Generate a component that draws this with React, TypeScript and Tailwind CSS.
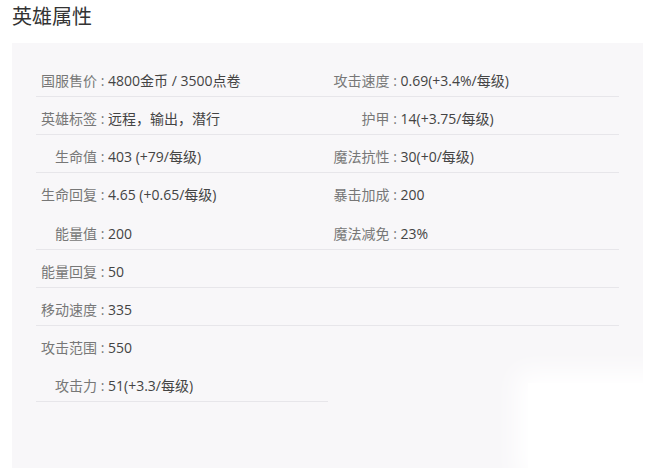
import React from "react";

type Cell = { label: string; value: string } | null;

const rows: { left: Cell; right: Cell; lb: boolean; rb: boolean }[] = [
  { left: { label: "国服售价", value: "4800金币 / 3500点卷" }, right: { label: "攻击速度", value: "0.69(+3.4%/每级)" }, lb: true, rb: true },
  { left: { label: "英雄标签", value: "远程，输出，潜行" }, right: { label: "护甲", value: "14(+3.75/每级)" }, lb: true, rb: true },
  { left: { label: "生命值", value: "403 (+79/每级)" }, right: { label: "魔法抗性", value: "30(+0/每级)" }, lb: true, rb: true },
  { left: { label: "生命回复", value: "4.65 (+0.65/每级)" }, right: { label: "暴击加成", value: "200" }, lb: false, rb: false },
  { left: { label: "能量值", value: "200" }, right: { label: "魔法减免", value: "23%" }, lb: true, rb: true },
  { left: { label: "能量回复", value: "50" }, right: null, lb: true, rb: true },
  { left: { label: "移动速度", value: "335" }, right: null, lb: true, rb: true },
  { left: { label: "攻击范围", value: "550" }, right: null, lb: false, rb: false },
  { left: { label: "攻击力", value: "51(+3.3/每级)" }, right: null, lb: true, rb: false },
];

function CellView({ cell, border, right }: { cell: Cell; border: boolean; right?: boolean }) {
  return (
    <div
      className={
        "h-[38.125px] flex items-start pt-[12px] " +
        (right ? "pl-[6px] " : "pl-[5px] ") +
        (border ? "border-b border-[#e7e6ea]" : "")
      }
    >
      {cell && (
        <>
          <span className="w-[56px] text-right text-[14px] leading-[20px] text-[#777] whitespace-nowrap">
            {cell.label}
          </span>
          <span className="w-[11px] text-center text-[14px] leading-[20px] text-[#777]">:</span>
          <span className="text-[14px] leading-[20px] text-[#444] whitespace-nowrap">{cell.value}</span>
        </>
      )}
    </div>
  );
}

export default function App() {
  return (
    <div
      className="relative w-[656px] h-[468px] bg-white overflow-hidden"
      style={{ fontFamily: '"Open Sans", "Noto Sans CJK SC", sans-serif' }}
    >
      <div className="pl-[12px] pt-[3px] h-[43px] text-[20px] leading-[28px] text-[#333]">英雄属性</div>
      <div className="ml-[12px] w-[631px] h-[425px] bg-[#f8f7f9] px-6 pt-[16px]">
        <div className="grid grid-cols-2">
          {rows.map((r, i) => (
            <React.Fragment key={i}>
              <CellView cell={r.left} border={r.lb} />
              <CellView cell={r.right} border={r.rb} right />
            </React.Fragment>
          ))}
        </div>
      </div>
      <div className="absolute left-[528px] top-[383px] right-0 bottom-0 bg-white shadow-[0_0_24px_12px_#ffffff]" />
    </div>
  );
}
